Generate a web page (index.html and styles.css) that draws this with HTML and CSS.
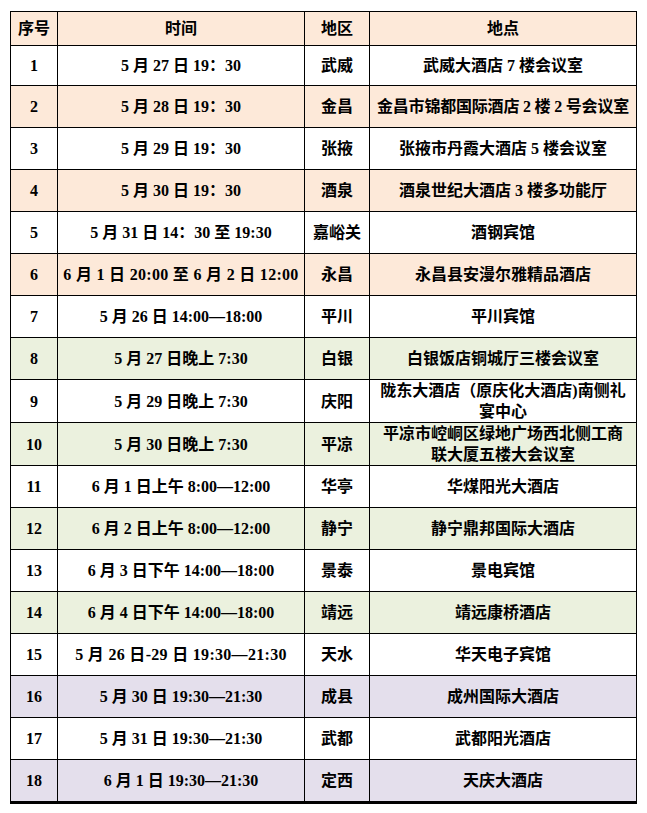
FILE: index.html
```html
<!DOCTYPE html>
<html lang="zh-CN">
<head>
<meta charset="utf-8">
<link rel="stylesheet" href="styles.css">
</head>
<body>
<div class="wrap">
<table class="sched">
<colgroup><col class="c1"><col class="c2"><col class="c3"><col class="c4"></colgroup>
<thead>
<tr class="head"><th>序号</th><th>时间</th><th>地区</th><th>地点</th></tr>
</thead>
<tbody>
<tr class="first"><td>1</td><td>5 月 27 日 19：30</td><td>武威</td><td>武威大酒店 7 楼会议室</td></tr>
<tr class="peach"><td>2</td><td>5 月 28 日 19：30</td><td>金昌</td><td class="tight">金昌市锦都国际酒店 2 楼 2 号会议室</td></tr>
<tr><td>3</td><td>5 月 29 日 19：30</td><td>张掖</td><td>张掖市丹霞大酒店 5 楼会议室</td></tr>
<tr class="peach"><td>4</td><td>5 月 30 日 19：30</td><td>酒泉</td><td>酒泉世纪大酒店 3 楼多功能厅</td></tr>
<tr><td>5</td><td>5 月 31 日 14：30 至 19:30</td><td>嘉峪关</td><td>酒钢宾馆</td></tr>
<tr class="peach"><td>6</td><td class="wide">6 月 1 日 20:00 至 6 月 2 日 12:00</td><td>永昌</td><td>永昌县安漫尔雅精品酒店</td></tr>
<tr><td>7</td><td>5 月 26 日 14:00—18:00</td><td>平川</td><td>平川宾馆</td></tr>
<tr class="green"><td>8</td><td>5 月 27 日晚上 7:30</td><td>白银</td><td>白银饭店铜城厅三楼会议室</td></tr>
<tr><td>9</td><td>5 月 29 日晚上 7:30</td><td>庆阳</td><td class="two">陇东大酒店（原庆化大酒店)南侧礼<br>宴中心</td></tr>
<tr class="green"><td>10</td><td>5 月 30 日晚上 7:30</td><td>平凉</td><td class="two">平凉市崆峒区绿地广场西北侧工商<br>联大厦五楼大会议室</td></tr>
<tr><td>11</td><td>6 月 1 日上午 8:00—12:00</td><td>华亭</td><td>华煤阳光大酒店</td></tr>
<tr class="green"><td>12</td><td>6 月 2 日上午 8:00—12:00</td><td>静宁</td><td>静宁鼎邦国际大酒店</td></tr>
<tr><td>13</td><td>6 月 3 日下午 14:00—18:00</td><td>景泰</td><td>景电宾馆</td></tr>
<tr class="green"><td>14</td><td>6 月 4 日下午 14:00—18:00</td><td>靖远</td><td>靖远康桥酒店</td></tr>
<tr><td>15</td><td class="wide">5 月 26 日-29 日 19:30—21:30</td><td>天水</td><td>华天电子宾馆</td></tr>
<tr class="lilac"><td>16</td><td>5 月 30 日 19:30—21:30</td><td>成县</td><td>成州国际大酒店</td></tr>
<tr><td>17</td><td>5 月 31 日 19:30—21:30</td><td>武都</td><td>武都阳光酒店</td></tr>
<tr class="lilac last"><td>18</td><td>6 月 1 日 19:30—21:30</td><td>定西</td><td>天庆大酒店</td></tr>
</tbody>
</table>
</div>
</body>
</html>
```
FILE: styles.css
```css
html, body {
  margin: 0;
  padding: 0;
  background: #ffffff;
}
.wrap {
  padding: 11px 0 0 10px;
}
.sched {
  border-collapse: collapse;
  table-layout: fixed;
  width: 626px;
  font-family: "Liberation Serif", "Noto Sans CJK SC", serif;
  font-weight: 700;
  font-size: 16px;
  color: #000000;
}
.c1 { width: 47px; }
.c2 { width: 247px; }
.c3 { width: 65px; }
.c4 { width: 267px; }
.sched th, .sched td {
  border: 1px solid #000000;
  text-align: center;
  vertical-align: middle;
  padding: 0 2px;
  line-height: 21px;
  white-space: nowrap;
  overflow: hidden;
}
.sched td.two {
  line-height: 21px;
}
.sched td.tight {
  letter-spacing: -0.2px;
}
.sched td.wide {
  letter-spacing: 0.3px;
}
.head th {
  height: 33px;
  font-weight: 700;
}
.sched tbody td {
  height: 41px;
}
.sched tbody tr.first td {
  height: 39px;
}
.head,
.peach { background: #fde9d9; }
.green { background: #ebf1de; }
.lilac { background: #e4dfec; }
.last td {
  border-bottom: 3px solid #000000;
}
```
